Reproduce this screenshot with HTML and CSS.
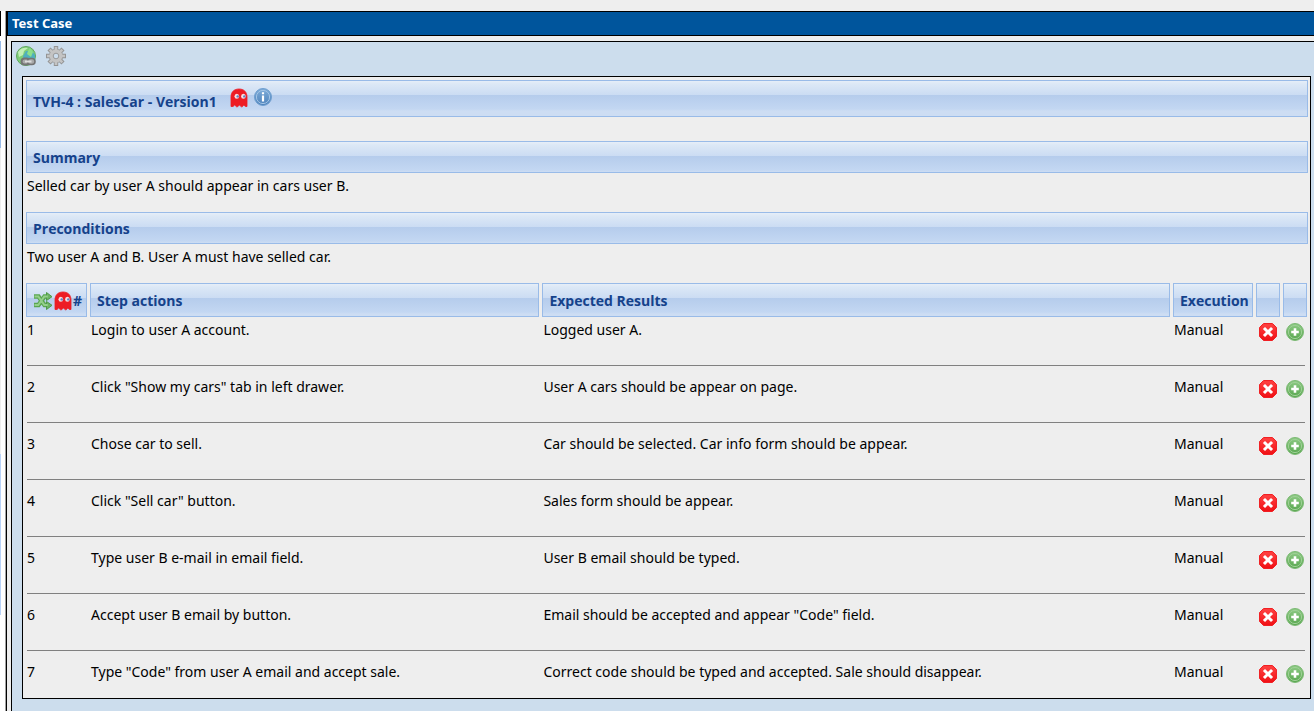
FILE: index.html
```html
<!DOCTYPE html>
<html lang="en">
<head>
<meta charset="utf-8">
<title>Test Case</title>
<link rel="stylesheet" href="styles.css">
</head>
<body>
<svg class="defs" aria-hidden="true">
  <defs>
    <linearGradient id="g-green" x1="0" y1="0" x2="0" y2="1"><stop offset="0" stop-color="#8fcb86"/><stop offset="1" stop-color="#57a64e"/></linearGradient>
    <linearGradient id="g-blue" x1="0" y1="0" x2="0" y2="1"><stop offset="0" stop-color="#7fadd9"/><stop offset="1" stop-color="#4d82bb"/></linearGradient>
    <linearGradient id="g-red" x1="0" y1="0" x2="0" y2="1"><stop offset="0" stop-color="#ff4444"/><stop offset="1" stop-color="#f01015"/></linearGradient>
    <symbol id="ghost" viewBox="0 0 18 20">
      <path d="M1 18.500V9C1 4 4 1 9 1s8 3 8 8v9.500h-1.500L13.800 17l-1.600 1.800h-.8L9.400 17l-1.800 1.800h-1L4.700 17 3 18.500Z" fill="#ed1c24" stroke="#ed1c24" stroke-width=".8" stroke-linejoin="round"/>
      <ellipse cx="6.800" cy="8.200" rx="2.300" ry="2.500" fill="#f6dfe2"/><ellipse cx="13.400" cy="8.200" rx="2.300" ry="2.500" fill="#f6dfe2"/>
      <circle cx="7.700" cy="8.400" r="1.200" fill="#5f7fc0"/><circle cx="14.300" cy="8.400" r="1.200" fill="#5f7fc0"/>
    </symbol>
    <symbol id="remove" viewBox="0 0 18 18">
      <path d="M4.500.6h9l3.900 3.900v9l-3.900 3.900h-9L.6 13.500v-9Z" fill="url(#g-red)" stroke="#f01519" stroke-width="1"/>
      <path d="m6 6 6 6M12 6l-6 6" stroke="#fff" stroke-width="3" stroke-linecap="square"/>
    </symbol>
    <symbol id="add" viewBox="0 0 18 18">
      <circle cx="9" cy="9" r="8.500" fill="url(#g-green)" stroke="#7cb974" stroke-width="1"/>
      <circle cx="9" cy="9" r="6.600" fill="none" stroke="#9fd097" stroke-width="1"/>
      <path d="M9 5.200v7.600M5.200 9h7.600" stroke="#fff" stroke-width="2.600"/>
    </symbol>
  </defs>
</svg>
<div class="page">
  <aside class="tree-edge" aria-hidden="true">
    <div class="edge-title"></div>
    <div class="edge-filter"></div>
    <div class="edge-blank"></div>
    <div class="edge-selected"></div>
  </aside>
  <main class="workframe">
    <h1 class="title">Test Case</h1>
    <div class="panel">
      <div class="toolbar">
        <button class="icon-button" type="button" aria-label="Direct link">
          <svg class="icon-20" viewBox="0 0 20 20">
            <circle cx="10" cy="10" r="9.500" fill="#7fce78" stroke="#5fa65e"/>
            <path d="M2 6C4 2 9 1 12 2L8 5 7 9l-4 2Z" fill="#c2efb6"/>
            <path d="M10 5l6 0 3 4v6H7V10Z" fill="#4fb0bd"/>
            <path d="m14 2 3 4-2 5-4-3 1-3Z" fill="#8cdf8b"/>
            <rect x="5.500" y="12.500" width="8" height="6" rx="3" fill="#aaa" stroke="#747474" stroke-width="2"/>
            <rect x="11.500" y="12.500" width="7.500" height="6" rx="3" fill="#aaa" stroke="#747474" stroke-width="1.600"/>
            <path d="M9 15.500h6.500" stroke="#ddd" stroke-width="2"/>
          </svg>
        </button>
        <button class="icon-button" type="button" aria-label="Actions">
          <svg class="icon-20" viewBox="0 0 20 20">
            <path d="M10 0v20M0 10h20M3 3l14 14M17 3 3 17" stroke="#949494" stroke-width="4.400"/>
            <circle cx="10" cy="10" r="7.200" fill="#9c9c9c"/>
            <path d="M10 1v18M1 10h18M3.700 3.700l12.600 12.600M16.300 3.700 3.700 16.300" stroke="#c4c4c4" stroke-width="2.600"/>
            <circle cx="10" cy="10" r="6.400" fill="#c4c4c4"/>
            <circle cx="10" cy="10" r="2.800" fill="#ccdded" stroke="#999"/>
          </svg>
        </button>
      </div>
      <div class="content">
        <h2 class="bar case-title">TVH-4 : SalesCar - Version1
          <button class="icon-button case-icon" type="button" aria-label="Ghost string"><svg class="ghost"><use href="#ghost"/></svg></button>
          <button class="icon-button info-icon" type="button" aria-label="Information"><svg class="icon-18" viewBox="0 0 18 18"><circle cx="9" cy="9" r="8.500" fill="url(#g-blue)" stroke="#6f9fd0"/><circle cx="9" cy="9" r="6.600" fill="none" stroke="#a3c4e6"/><path d="M9 7.500v6M9 4.200v2" stroke="#fff" stroke-width="2.200"/></svg></button>
        </h2>
        <section class="section">
          <h2 class="bar">Summary</h2>
          <p class="text">Selled car by user A should appear in cars user B.</p>
        </section>
        <section class="section">
          <h2 class="bar">Preconditions</h2>
          <p class="text">Two user A and B. User A must have selled car.</p>
        </section>
        <table class="steps">
          <colgroup><col class="c-num"><col class="c-action"><col><col class="c-exec"><col class="c-icon"><col class="c-icon"></colgroup>
          <thead>
            <tr>
              <th class="bar"><span class="num-head"><button class="icon-button" type="button" aria-label="Reorder"><svg class="icon-20" viewBox="0 0 20 20"><path d="M1 5.500h4.500l6 8.500H14M1 14h4.500l6-8.500H14" fill="none" stroke="#5aa650" stroke-width="4.400"/><path d="M13.500 1.500 19 5.700 13.500 9.500ZM13.500 10.500 19 14.300 13.500 18.500Z" fill="#6db464" stroke="#4f9a46"/><path d="M1.500 5.500h3.800l6 8.500h3.500M1.500 14h3.800l6-8.500h3.500" fill="none" stroke="#94cf8b" stroke-width="2"/></svg></button><button class="icon-button" type="button" aria-label="Show ghost string"><svg class="ghost"><use href="#ghost"/></svg></button>#</span></th>
              <th class="bar">Step actions</th>
              <th class="bar">Expected Results</th>
              <th class="bar">Execution</th>
              <th class="bar"></th>
              <th class="bar"></th>
            </tr>
          </thead>
          <tbody>
            <tr class="step"><td>1</td><td>Login to user A account.</td><td>Logged user A.</td><td>Manual</td><td><button class="icon-button" type="button" aria-label="Delete step 1"><svg class="icon-18"><use href="#remove"/></svg></button></td><td><button class="icon-button" type="button" aria-label="Insert step after 1"><svg class="icon-18"><use href="#add"/></svg></button></td></tr>
            <tr><td colspan="6"><hr></td></tr>
            <tr class="step"><td>2</td><td>Click "Show my cars" tab in left drawer.</td><td>User A cars should be appear on page.</td><td>Manual</td><td><button class="icon-button" type="button" aria-label="Delete step 2"><svg class="icon-18"><use href="#remove"/></svg></button></td><td><button class="icon-button" type="button" aria-label="Insert step after 2"><svg class="icon-18"><use href="#add"/></svg></button></td></tr>
            <tr><td colspan="6"><hr></td></tr>
            <tr class="step"><td>3</td><td>Chose car to sell.</td><td>Car should be selected. Car info form should be appear.</td><td>Manual</td><td><button class="icon-button" type="button" aria-label="Delete step 3"><svg class="icon-18"><use href="#remove"/></svg></button></td><td><button class="icon-button" type="button" aria-label="Insert step after 3"><svg class="icon-18"><use href="#add"/></svg></button></td></tr>
            <tr><td colspan="6"><hr></td></tr>
            <tr class="step"><td>4</td><td>Click "Sell car" button.</td><td>Sales form should be appear.</td><td>Manual</td><td><button class="icon-button" type="button" aria-label="Delete step 4"><svg class="icon-18"><use href="#remove"/></svg></button></td><td><button class="icon-button" type="button" aria-label="Insert step after 4"><svg class="icon-18"><use href="#add"/></svg></button></td></tr>
            <tr><td colspan="6"><hr></td></tr>
            <tr class="step"><td>5</td><td>Type user B e-mail in email field.</td><td>User B email should be typed.</td><td>Manual</td><td><button class="icon-button" type="button" aria-label="Delete step 5"><svg class="icon-18"><use href="#remove"/></svg></button></td><td><button class="icon-button" type="button" aria-label="Insert step after 5"><svg class="icon-18"><use href="#add"/></svg></button></td></tr>
            <tr><td colspan="6"><hr></td></tr>
            <tr class="step"><td>6</td><td>Accept user B email by button.</td><td>Email should be accepted and appear "Code" field.</td><td>Manual</td><td><button class="icon-button" type="button" aria-label="Delete step 6"><svg class="icon-18"><use href="#remove"/></svg></button></td><td><button class="icon-button" type="button" aria-label="Insert step after 6"><svg class="icon-18"><use href="#add"/></svg></button></td></tr>
            <tr><td colspan="6"><hr></td></tr>
            <tr class="step"><td>7</td><td>Type "Code" from user A email and accept sale.</td><td>Correct code should be typed and accepted. Sale should disappear.</td><td>Manual</td><td><button class="icon-button" type="button" aria-label="Delete step 7"><svg class="icon-18"><use href="#remove"/></svg></button></td><td><button class="icon-button" type="button" aria-label="Insert step after 7"><svg class="icon-18"><use href="#add"/></svg></button></td></tr>
          </tbody>
        </table>
      </div>
    </div>
  </main>
</div>
</body>
</html>
```
FILE: styles.css
```css
* { box-sizing: border-box; }
body { margin: 0; background: #eee; color: #000; font: 14px/18px "Noto Sans", sans-serif; }
.defs { position: absolute; width: 0; height: 0; }
.page { display: flex; min-height: 100vh; padding-top: 11px; }
.tree-edge { display: flex; flex-direction: column; width: 6px; background: #fff; border-right: 1px solid #a0a0a0; }
.tree-edge > div { width: 1px; }
.edge-title { height: 25px; margin-bottom: 5px; background: #000; }
.edge-filter { height: 107px; background: #99bbe8; }
.edge-blank { height: 306px; background: #eee; }
.edge-selected { height: 161px; background: #b8d2f8; }
.workframe { flex: 1; display: flex; flex-direction: column; border-left: 1px solid #000; }
.title { margin: 0; padding: 2px 4px 3px; background: #00559c; color: #fff; border: 1px solid #000; border-width: 1px 0 1px 1px; font-size: 13px; line-height: 18px; font-weight: bold; }
.panel { flex: 1; margin: 5px 0 0 4px; padding: 0 3px 12px 10px; background: #ccdded; border: 1px solid #000; border-width: 1px 0 0 1px; }
.toolbar { display: flex; align-items: flex-start; gap: 10px; height: 34px; margin-left: -6px; padding-top: 4px; }
.icon-button { display: block; padding: 0; border: 0; background: none; cursor: pointer; }
.icon-button svg { display: block; }
.icon-20 { width: 20px; height: 20px; }
.icon-18 { width: 18px; height: 18px; }
.ghost { width: 18px; height: 20px; }
.content { border: 1px solid #000; background: #eee; padding: 3px 0; }
.bar { margin: 0 2px 0 3px; padding: 7px 6px 5px; border: 1px solid #99bbe8; color: #15428b; font: bold 14px/18px "Open Sans", sans-serif; background: linear-gradient(#e6eef8 0, #dce8f6 3px, #cbdcf3 14px, #b5ccec 14px, #c3d7f2 28px, #cdddf3 30px); }
.case-title { display: flex; align-items: center; height: 37px; margin-bottom: 24px; padding: 9px 6px 3px; }
.case-icon { margin: 0 6px 8px 13px; }
.info-icon { margin-bottom: 9px; }
.section { margin-bottom: 17px; }
.text { margin: 0; padding: 4px 4px 0; }
.steps { width: 100%; table-layout: fixed; border-collapse: separate; border-spacing: 3px 0; }
.c-num { width: 61px; }
.c-action { width: 35.5%; }
.c-exec { width: 80px; }
.c-icon { width: 24px; }
.steps th { height: 34px; text-align: left; }
.num-head { display: flex; align-items: center; gap: 1px; white-space: nowrap; }
.steps td { padding: 0 0 0 1px; }
.step td { height: 47px; padding-top: 4px; vertical-align: top; }
.step:last-child td { height: 36px; }
.step .icon-button { margin: 2px 0 0 2px; }
hr { margin: 1px 2px 8px 0; border: 0; height: 1px; background: #808080; }
```
